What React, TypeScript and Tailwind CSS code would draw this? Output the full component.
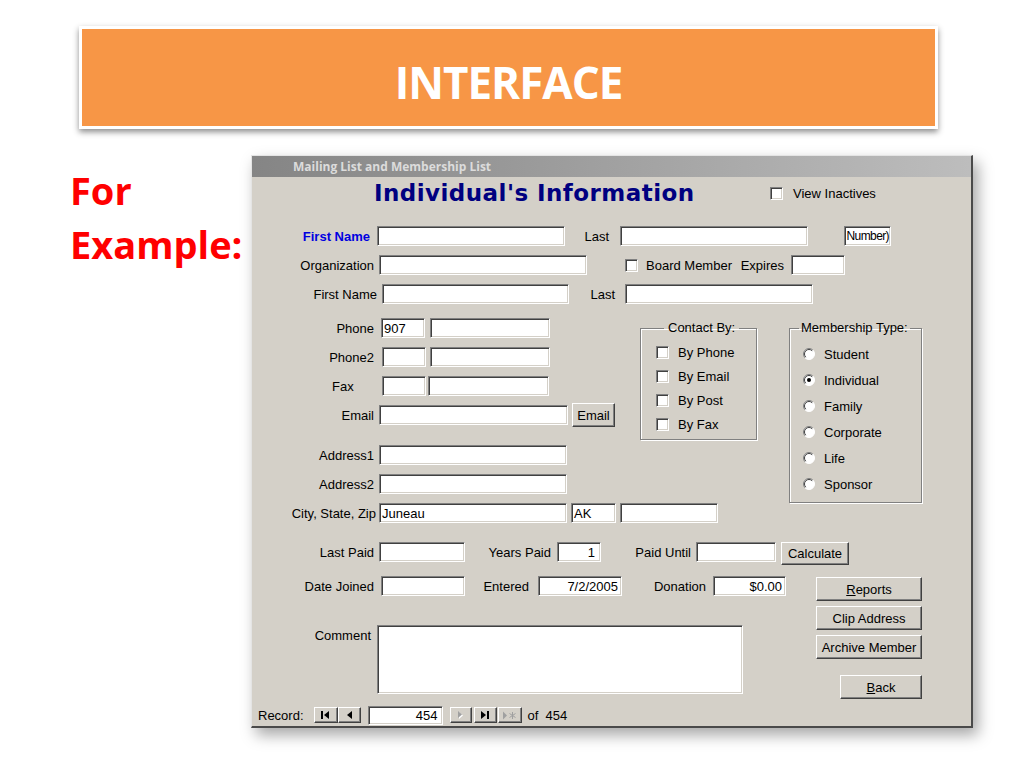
import React from "react";

const sunk =
  "bg-white border border-t-[#808080] border-l-[#808080] border-b-[#ffffff] border-r-[#ffffff] shadow-[inset_1px_1px_0_#404040,inset_-1px_-1px_0_#d4d0c8]";
const raised =
  "bg-[#d4d0c8] border border-t-[#ffffff] border-l-[#ffffff] border-b-[#404040] border-r-[#404040] shadow-[inset_-1px_-1px_0_#808080] flex items-center justify-center shrink-0";

function Input({ cls, text, right }: { cls: string; text?: string; right?: boolean }) {
  return (
    <div
      className={`${sunk} ${cls} h-[20px] shrink-0 flex items-center overflow-hidden whitespace-nowrap px-[2px] ${
        right ? "justify-end" : ""
      }`}
    >
      {text}
    </div>
  );
}

function Lbl({ cls, children }: { cls: string; children: React.ReactNode }) {
  return <div className={`${cls} shrink-0 whitespace-nowrap text-right`}>{children}</div>;
}

function Check() {
  return <div className={`${sunk} w-[13px] h-[13px] shrink-0`} />;
}

function Radio({ on }: { on?: boolean }) {
  return (
    <svg width="12" height="12" viewBox="0 0 12 12" className="shrink-0">
      <circle cx="6" cy="6" r="5.5" fill="#ffffff" />
      <path d="M9.9 2.1 A5.5 5.5 0 0 0 2.1 9.9" stroke="#808080" fill="none" />
      <path d="M9.2 2.8 A4.5 4.5 0 0 0 2.8 9.2" stroke="#404040" fill="none" />
      <path d="M9.9 2.1 A5.5 5.5 0 0 1 2.1 9.9" stroke="#ffffff" fill="none" />
      {on && <circle cx="6" cy="6" r="2" fill="#000000" />}
    </svg>
  );
}

function Btn({ cls, children }: { cls: string; children: React.ReactNode }) {
  return <div className={`${raised} ${cls}`}>{children}</div>;
}

function Row({ cls, children }: { cls: string; children: React.ReactNode }) {
  return <div className={`flex items-center h-[20px] shrink-0 ${cls}`}>{children}</div>;
}

export default function App() {
  return (
    <div className="w-[1024px] h-[768px] bg-white overflow-hidden relative font-['Liberation_Sans',Arial,sans-serif]">
      <div className="ml-[79px] mt-[26px] w-[859px] h-[103px] pt-[8px] border-[3px] border-white bg-[#f79646] shadow-[0_3px_6px_rgba(0,0,0,0.45)] flex items-center justify-center">
        <span className="text-white font-bold text-[44px] tracking-[-1px] font-['Open_Sans',sans-serif] leading-none">
          INTERFACE
        </span>
      </div>

      <div className="flex mt-[26px]">
        <div className="w-[251px] shrink-0 pl-[70px] pt-[8px] text-[#ff0000] font-bold text-[38px] leading-[54px] font-['Open_Sans',sans-serif]">
          For
          <br />
          Example:
        </div>

        <div className="w-[722px] h-[573px] shrink-0 flex flex-col bg-[#d4d0c8] border-l border-t border-l-[#e4e4e4] border-t-[#e4e4e4] border-r-2 border-b-2 border-r-[#4a4a4a] border-b-[#4a4a4a] shadow-[5px_7px_14px_rgba(0,0,0,0.35)] text-[13px] leading-[15px] text-black">
          <div className="h-[21px] shrink-0 bg-linear-to-r from-[#858585] to-[#bdbdbd] flex items-center pl-[41px] text-[12px] font-bold text-[#dcdcdc] font-['Open_Sans',sans-serif]">
            Mailing List and Membership List
          </div>

          <div className="flex flex-col flex-1">
            {/* heading */}
            <div className="flex items-center h-[24px] mt-[4px] shrink-0">
              <div className="w-[518px] shrink-0 pl-[122px] text-[#000080] font-bold text-[23px] leading-[24px] tracking-[0.45px] font-['DejaVu_Sans',Verdana,sans-serif] whitespace-nowrap">
                Individual's Information
              </div>
              <Check />
              <span className="ml-[10px]">View Inactives</span>
            </div>

            {/* row 1 */}
            <Row cls="mt-[21px]">
              <Lbl cls="w-[125px] pr-[7px] text-[#0000e0] font-bold">First Name</Lbl>
              <Input cls="w-[188px]" />
              <Lbl cls="w-[55px] pr-[11px]">Last</Lbl>
              <Input cls="w-[188px]" />
              <div className="w-[36px] shrink-0" />
              <div className={`${sunk} w-[47px] h-[20px] shrink-0 flex items-center justify-end overflow-hidden whitespace-nowrap px-[1px] text-[12px] tracking-[-0.6px]`}>
                Number)
              </div>
            </Row>

            {/* row 2 */}
            <Row cls="mt-[9px]">
              <Lbl cls="w-[127px] pr-[5px]">Organization</Lbl>
              <Input cls="w-[208px]" />
              <div className="w-[38px] shrink-0" />
              <Check />
              <div className="w-[153px] shrink-0 pl-[8px] pr-[7px] flex justify-between whitespace-nowrap">
                <span>Board Member</span>
                <span>Expires</span>
              </div>
              <Input cls="w-[54px]" />
            </Row>

            {/* row 3 */}
            <Row cls="mt-[9px]">
              <Lbl cls="w-[130px] pr-[5px]">First Name</Lbl>
              <Input cls="w-[187px]" />
              <Lbl cls="w-[56px] pr-[10px]">Last</Lbl>
              <Input cls="w-[188px]" />
            </Row>

            {/* middle section */}
            <div className="flex items-start mt-[14px] shrink-0">
              <div className="w-[388px] shrink-0 flex flex-col">
                <Row cls="">
                  <Lbl cls="w-[129px] pr-[7px]">Phone</Lbl>
                  <Input cls="w-[44px]" text="907" />
                  <Input cls="w-[120px] ml-[5px]" />
                </Row>
                <Row cls="mt-[9px]">
                  <Lbl cls="w-[130px] pr-[8px]">Phone2</Lbl>
                  <Input cls="w-[44px]" />
                  <Input cls="w-[120px] ml-[4px]" />
                </Row>
                <Row cls="mt-[9px]">
                  <div className="w-[130px] shrink-0 pl-[80px]">Fax</div>
                  <Input cls="w-[44px]" />
                  <Input cls="w-[121px] ml-[2px]" />
                </Row>
                <Row cls="mt-[9px]">
                  <Lbl cls="w-[127px] pr-[5px]">Email</Lbl>
                  <Input cls="w-[189px]" />
                  <Btn cls="w-[43px] h-[24px] ml-[4px]">Email</Btn>
                </Row>
                <Row cls="mt-[20px]">
                  <Lbl cls="w-[127px] pr-[5px]">Address1</Lbl>
                  <Input cls="w-[188px]" />
                </Row>
                <Row cls="mt-[9px]">
                  <Lbl cls="w-[127px] pr-[5px]">Address2</Lbl>
                  <Input cls="w-[188px]" />
                </Row>
              </div>

              <fieldset className="mt-[4px] w-[117px] h-[118px] shrink-0 border border-[#808080] shadow-[1px_1px_0_#ffffff,inset_1px_1px_0_#ffffff] pl-[15px] pt-[6px]">
                <legend className="ml-[8px] px-[4px] leading-[12px]">Contact By:</legend>
                {["By Phone", "By Email", "By Post", "By Fax"].map((t) => (
                  <div key={t} className="flex items-center h-[24px]">
                    <Check />
                    <span className="ml-[9px] whitespace-nowrap">{t}</span>
                  </div>
                ))}
              </fieldset>

              <fieldset className="ml-[32px] mt-[4px] w-[133px] h-[181px] shrink-0 border border-[#808080] shadow-[1px_1px_0_#ffffff,inset_1px_1px_0_#ffffff] pl-[13px] pt-[7px]">
                <legend className="-ml-[4px] px-[2px] leading-[12px] whitespace-nowrap">Membership Type:</legend>
                {["Student", "Individual", "Family", "Corporate", "Life", "Sponsor"].map((t) => (
                  <div key={t} className="flex items-center h-[26px]">
                    <Radio on={t === "Individual"} />
                    <span className="ml-[9px] whitespace-nowrap">{t}</span>
                  </div>
                ))}
              </fieldset>
            </div>

            {/* city row */}
            <Row cls="">
              <Lbl cls="w-[127px] pr-[3px]">City, State, Zip</Lbl>
              <Input cls="w-[188px]" text="Juneau" />
              <Input cls="w-[45px] ml-[4px]" text="AK" />
              <Input cls="w-[98px] ml-[4px]" />
            </Row>

            {/* last paid row */}
            <Row cls="mt-[19px]">
              <Lbl cls="w-[127px] pr-[5px]">Last Paid</Lbl>
              <Input cls="w-[86px]" />
              <Lbl cls="w-[92px] pr-[6px]">Years Paid</Lbl>
              <Input cls="w-[44px] pr-[5px]" text="1" right />
              <Lbl cls="w-[95px] pr-[5px]">Paid Until</Lbl>
              <Input cls="w-[80px]" />
              <Btn cls="w-[68px] h-[23px] ml-[5px] self-start">Calculate</Btn>
            </Row>

            {/* bottom section */}
            <div className="flex items-start mt-[14px] shrink-0">
              <div className="w-[564px] shrink-0 flex flex-col">
                <Row cls="">
                  <Lbl cls="w-[129px] pr-[7px]">Date Joined</Lbl>
                  <Input cls="w-[84px]" />
                  <Lbl cls="w-[73px] pr-[9px]">Entered</Lbl>
                  <Input cls="w-[84px] pr-[3px]" text="7/2/2005" right />
                  <Lbl cls="w-[91px] pr-[7px]">Donation</Lbl>
                  <Input cls="w-[73px] pr-[3px]" text="$0.00" right />
                </Row>
                <div className="flex items-start mt-[29px]">
                  <Lbl cls="w-[125px] pr-[6px] pt-[3px]">Comment</Lbl>
                  <div className={`${sunk} w-[366px] h-[69px] shrink-0`} />
                </div>
              </div>
              <div className="w-[106px] shrink-0 flex flex-col">
                <Btn cls="w-[106px] h-[24px] mt-[1px]">
                  <span>
                    <span className="underline">R</span>eports
                  </span>
                </Btn>
                <Btn cls="w-[106px] h-[24px] mt-[5px]">Clip Address</Btn>
                <Btn cls="w-[106px] h-[24px] mt-[5px]">Archive Member</Btn>
                <Btn cls="w-[82px] h-[24px] mt-[16px] ml-[24px]">
                  <span>
                    <span className="underline">B</span>ack
                  </span>
                </Btn>
              </div>
            </div>

            {/* record bar */}
            <div className="mt-auto mb-[1px] h-[20px] flex items-center pl-[6px] shrink-0">
              <span>Record:</span>
              <Btn cls="w-[24px] h-[16px] ml-[10px]">
                <svg width="9" height="8" viewBox="0 0 9 8">
                  <rect x="0" y="0" width="2" height="8" fill="#000" />
                  <path d="M8 0 L3 4 L8 8 Z" fill="#000" />
                </svg>
              </Btn>
              <Btn cls="w-[23px] h-[16px]">
                <svg width="5" height="8" viewBox="0 0 5 8">
                  <path d="M5 0 L0 4 L5 8 Z" fill="#000" />
                </svg>
              </Btn>
              <div className={`${sunk} w-[75px] h-[19px] ml-[7px] shrink-0 flex items-center justify-end pr-[4px]`}>454</div>
              <Btn cls="w-[22px] h-[16px] ml-[7px]">
                <svg width="6" height="9" viewBox="0 0 6 9">
                  <path d="M1 1 L5 4.5 L1 8 Z" fill="#ffffff" />
                  <path d="M0 0 L4 3.5 L0 7 Z" fill="#a0a0a0" />
                </svg>
              </Btn>
              <Btn cls="w-[23px] h-[16px] ml-[2px]">
                <svg width="9" height="8" viewBox="0 0 9 8">
                  <path d="M0 0 L5 4 L0 8 Z" fill="#000" />
                  <rect x="6" y="0" width="2" height="8" fill="#000" />
                </svg>
              </Btn>
              <Btn cls="w-[24px] h-[16px] ml-[1px]">
                <svg width="14" height="9" viewBox="0 0 14 9">
                  <path d="M0 0.5 L4 4.5 L0 8.5 Z" fill="#a0a0a0" />
                  <path d="M9.5 1 V8 M6.5 2.5 L12.5 6.5 M12.5 2.5 L6.5 6.5" stroke="#a0a0a0" strokeWidth="1" />
                </svg>
              </Btn>
              <span className="ml-[6px]">of&nbsp;&nbsp;454</span>
            </div>
          </div>
        </div>
      </div>
    </div>
  );
}
